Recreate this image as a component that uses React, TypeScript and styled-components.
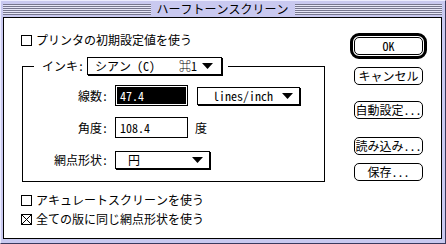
import React from "react";
import styled, { createGlobalStyle } from "styled-components";

const GlobalStyle = createGlobalStyle`
  html, body { margin: 0; padding: 0; background: #ffffff; }
  body {
    font-family: "Noto Sans Mono CJK JP", "Noto Sans CJK JP", "DejaVu Sans", sans-serif;
    font-size: 12px;
    color: #000;
    overflow: hidden;
  }
  * { box-sizing: border-box; }
`;

const Window = styled.div`
  width: 446px;
  height: 244px;
  display: flex;
  flex-direction: column;
  background: #c9c9f0;
  border-top: 1px solid #ececff;
  border-left: 1px solid #ececff;
  border-right: 1px solid #3a3a5e;
  border-bottom: 1px solid #3a3a5e;
  padding: 0 3px 4px 2px;
`;

const TitleBar = styled.div`
  height: 16px;
  flex: none;
  display: flex;
  align-items: flex-start;
`;

const Stripes = styled.div`
  flex: 1;
  height: 11px;
  margin-top: 3px;
  background: repeating-linear-gradient(
    to bottom,
    #77778f 0px,
    #77778f 1px,
    #e6e6f8 1px,
    #e6e6f8 2px
  );
`;

const Title = styled.div`
  height: 16px;
  line-height: 16px;
  padding: 0 6px;
  background: #c9c9f0;
  white-space: nowrap;
`;

const Content = styled.div`
  flex: 1;
  border: 1px solid #000;
  background: #fff;
  display: flex;
`;

const LeftCol = styled.div`
  width: 321px;
  padding: 14px 0 0 17px;
  display: flex;
  flex-direction: column;
`;

const CheckRow = styled.div<{ $mt?: number }>`
  height: 16px;
  display: flex;
  align-items: center;
  gap: 4px;
  line-height: 16px;
  white-space: nowrap;
  margin-top: ${(p) => p.$mt ?? 0}px;
`;

const Box = styled.span`
  width: 11px;
  height: 11px;
  border: 1px solid #000;
  display: block;
  flex: none;
  position: relative;
`;

const Group = styled.fieldset`
  margin: 9px 0 0 1px;
  width: 303px;
  border: 1px solid #000;
  padding: 0 0 11px 0;
  min-width: 0;
`;

const Legend = styled.legend`
  margin-left: 11px;
  padding: 0 6px 0 8px;
  display: flex;
  align-items: center;
  height: 18px;
`;

const LegendLabel = styled.span`
  width: 45px;
  line-height: 16px;
  white-space: nowrap;
`;

const Popup = styled.div<{ $w: number; $pl: number; $pr?: number }>`
  width: ${(p) => p.$w}px;
  height: 18px;
  flex: none;
  border: 1px solid #000;
  box-shadow: 1px 1px 0 #000;
  background: #fff;
  display: flex;
  align-items: center;
  padding: 0 ${(p) => p.$pr ?? 7}px 0 ${(p) => p.$pl}px;
  line-height: 16px;
  white-space: nowrap;
`;

const Shortcut = styled.span`
  margin-left: auto;
  margin-right: 5px;
`;

const Arrow = styled.svg<{ $auto?: boolean }>`
  width: 11px;
  height: 6px;
  flex: none;
  margin-left: ${(p) => (p.$auto ? "auto" : "0")};
`;

const Rows = styled.div`
  display: grid;
  grid-template-columns: 85px auto;
  grid-auto-rows: 21px;
  row-gap: 11px;
  column-gap: 7px;
  align-items: center;
  margin-top: 10px;
`;

const Label = styled.span`
  text-align: right;
  line-height: 16px;
  white-space: nowrap;
`;

const Controls = styled.div`
  display: flex;
  align-items: center;
`;

const Field = styled.div`
  width: 73px;
  height: 21px;
  border: 1px solid #000;
  padding: 1px;
  flex: none;
`;

const FieldText = styled.div<{ $selected?: boolean }>`
  height: 100%;
  padding-left: 3px;
  line-height: 17px;
  background: ${(p) => (p.$selected ? "#000" : "#fff")};
  color: ${(p) => (p.$selected ? "#fff" : "#000")};
  white-space: nowrap;
`;

const Unit = styled.span`
  margin-left: 7px;
  line-height: 16px;
`;

const Spacer = styled.span`
  width: 9px;
  flex: none;
`;

const RightCol = styled.div`
  margin-left: auto;
  margin-right: 14px;
  padding-top: 15px;
  width: 77px;
  display: flex;
  flex-direction: column;
  align-items: center;
`;

const DefaultRing = styled.div`
  border: 3px solid #000;
  border-radius: 9px;
  padding: 1px;
`;

const Button = styled.div<{ $mt?: number }>`
  width: 69px;
  height: 18px;
  border: 1px solid #000;
  border-radius: 5px;
  background: #fff;
  display: flex;
  align-items: center;
  justify-content: center;
  line-height: 16px;
  white-space: nowrap;
  margin-top: ${(p) => p.$mt ?? 0}px;
`;

function DownArrow({ auto }: { auto?: boolean }) {
  return (
    <Arrow $auto={auto} viewBox="0 0 11 6">
      <polygon points="0,0 11,0 5.5,6" fill="#000" />
    </Arrow>
  );
}

function CheckBox({ checked }: { checked?: boolean }) {
  return (
    <Box>
      {checked && (
        <svg
          width="9"
          height="9"
          viewBox="0 0 9 9"
          style={{ position: "absolute", left: 0, top: 0 }}
        >
          <line x1="0" y1="0" x2="9" y2="9" stroke="#000" strokeWidth="1" />
          <line x1="9" y1="0" x2="0" y2="9" stroke="#000" strokeWidth="1" />
        </svg>
      )}
    </Box>
  );
}

export default function App() {
  return (
    <>
      <GlobalStyle />
      <Window>
        <TitleBar>
          <Stripes />
          <Title>ハーフトーンスクリーン</Title>
          <Stripes />
        </TitleBar>
        <Content>
          <LeftCol>
            <CheckRow>
              <CheckBox />
              <span>プリンタの初期設定値を使う</span>
            </CheckRow>
            <Group>
              <Legend>
                <LegendLabel>インキ:</LegendLabel>
                <Popup $w={135} $pl={7} $pr={8}>
                  <span>シアン (C)</span>
                  <Shortcut>⌘1</Shortcut>
                  <DownArrow />
                </Popup>
              </Legend>
              <Rows>
                <Label>線数:</Label>
                <Controls>
                  <Field>
                    <FieldText $selected>47.4</FieldText>
                  </Field>
                  <Spacer />
                  <Popup $w={103} $pl={15} $pr={6}>
                    <span>lines/inch</span>
                    <DownArrow auto />
                  </Popup>
                </Controls>
                <Label>角度:</Label>
                <Controls>
                  <Field>
                    <FieldText>108.4</FieldText>
                  </Field>
                  <Unit>度</Unit>
                </Controls>
                <Label>網点形状:</Label>
                <Controls>
                  <Popup $w={95} $pl={12} $pr={6}>
                    <span>円</span>
                    <DownArrow auto />
                  </Popup>
                </Controls>
              </Rows>
            </Group>
            <CheckRow $mt={10}>
              <CheckBox />
              <span>アキュレートスクリーンを使う</span>
            </CheckRow>
            <CheckRow $mt={3}>
              <CheckBox checked />
              <span>全ての版に同じ網点形状を使う</span>
            </CheckRow>
          </LeftCol>
          <RightCol>
            <DefaultRing>
              <Button>OK</Button>
            </DefaultRing>
            <Button $mt={8}>キャンセル</Button>
            <Button $mt={16}>自動設定...</Button>
            <Button $mt={18}>読み込み...</Button>
            <Button $mt={8}>保存...</Button>
          </RightCol>
        </Content>
      </Window>
    </>
  );
}
